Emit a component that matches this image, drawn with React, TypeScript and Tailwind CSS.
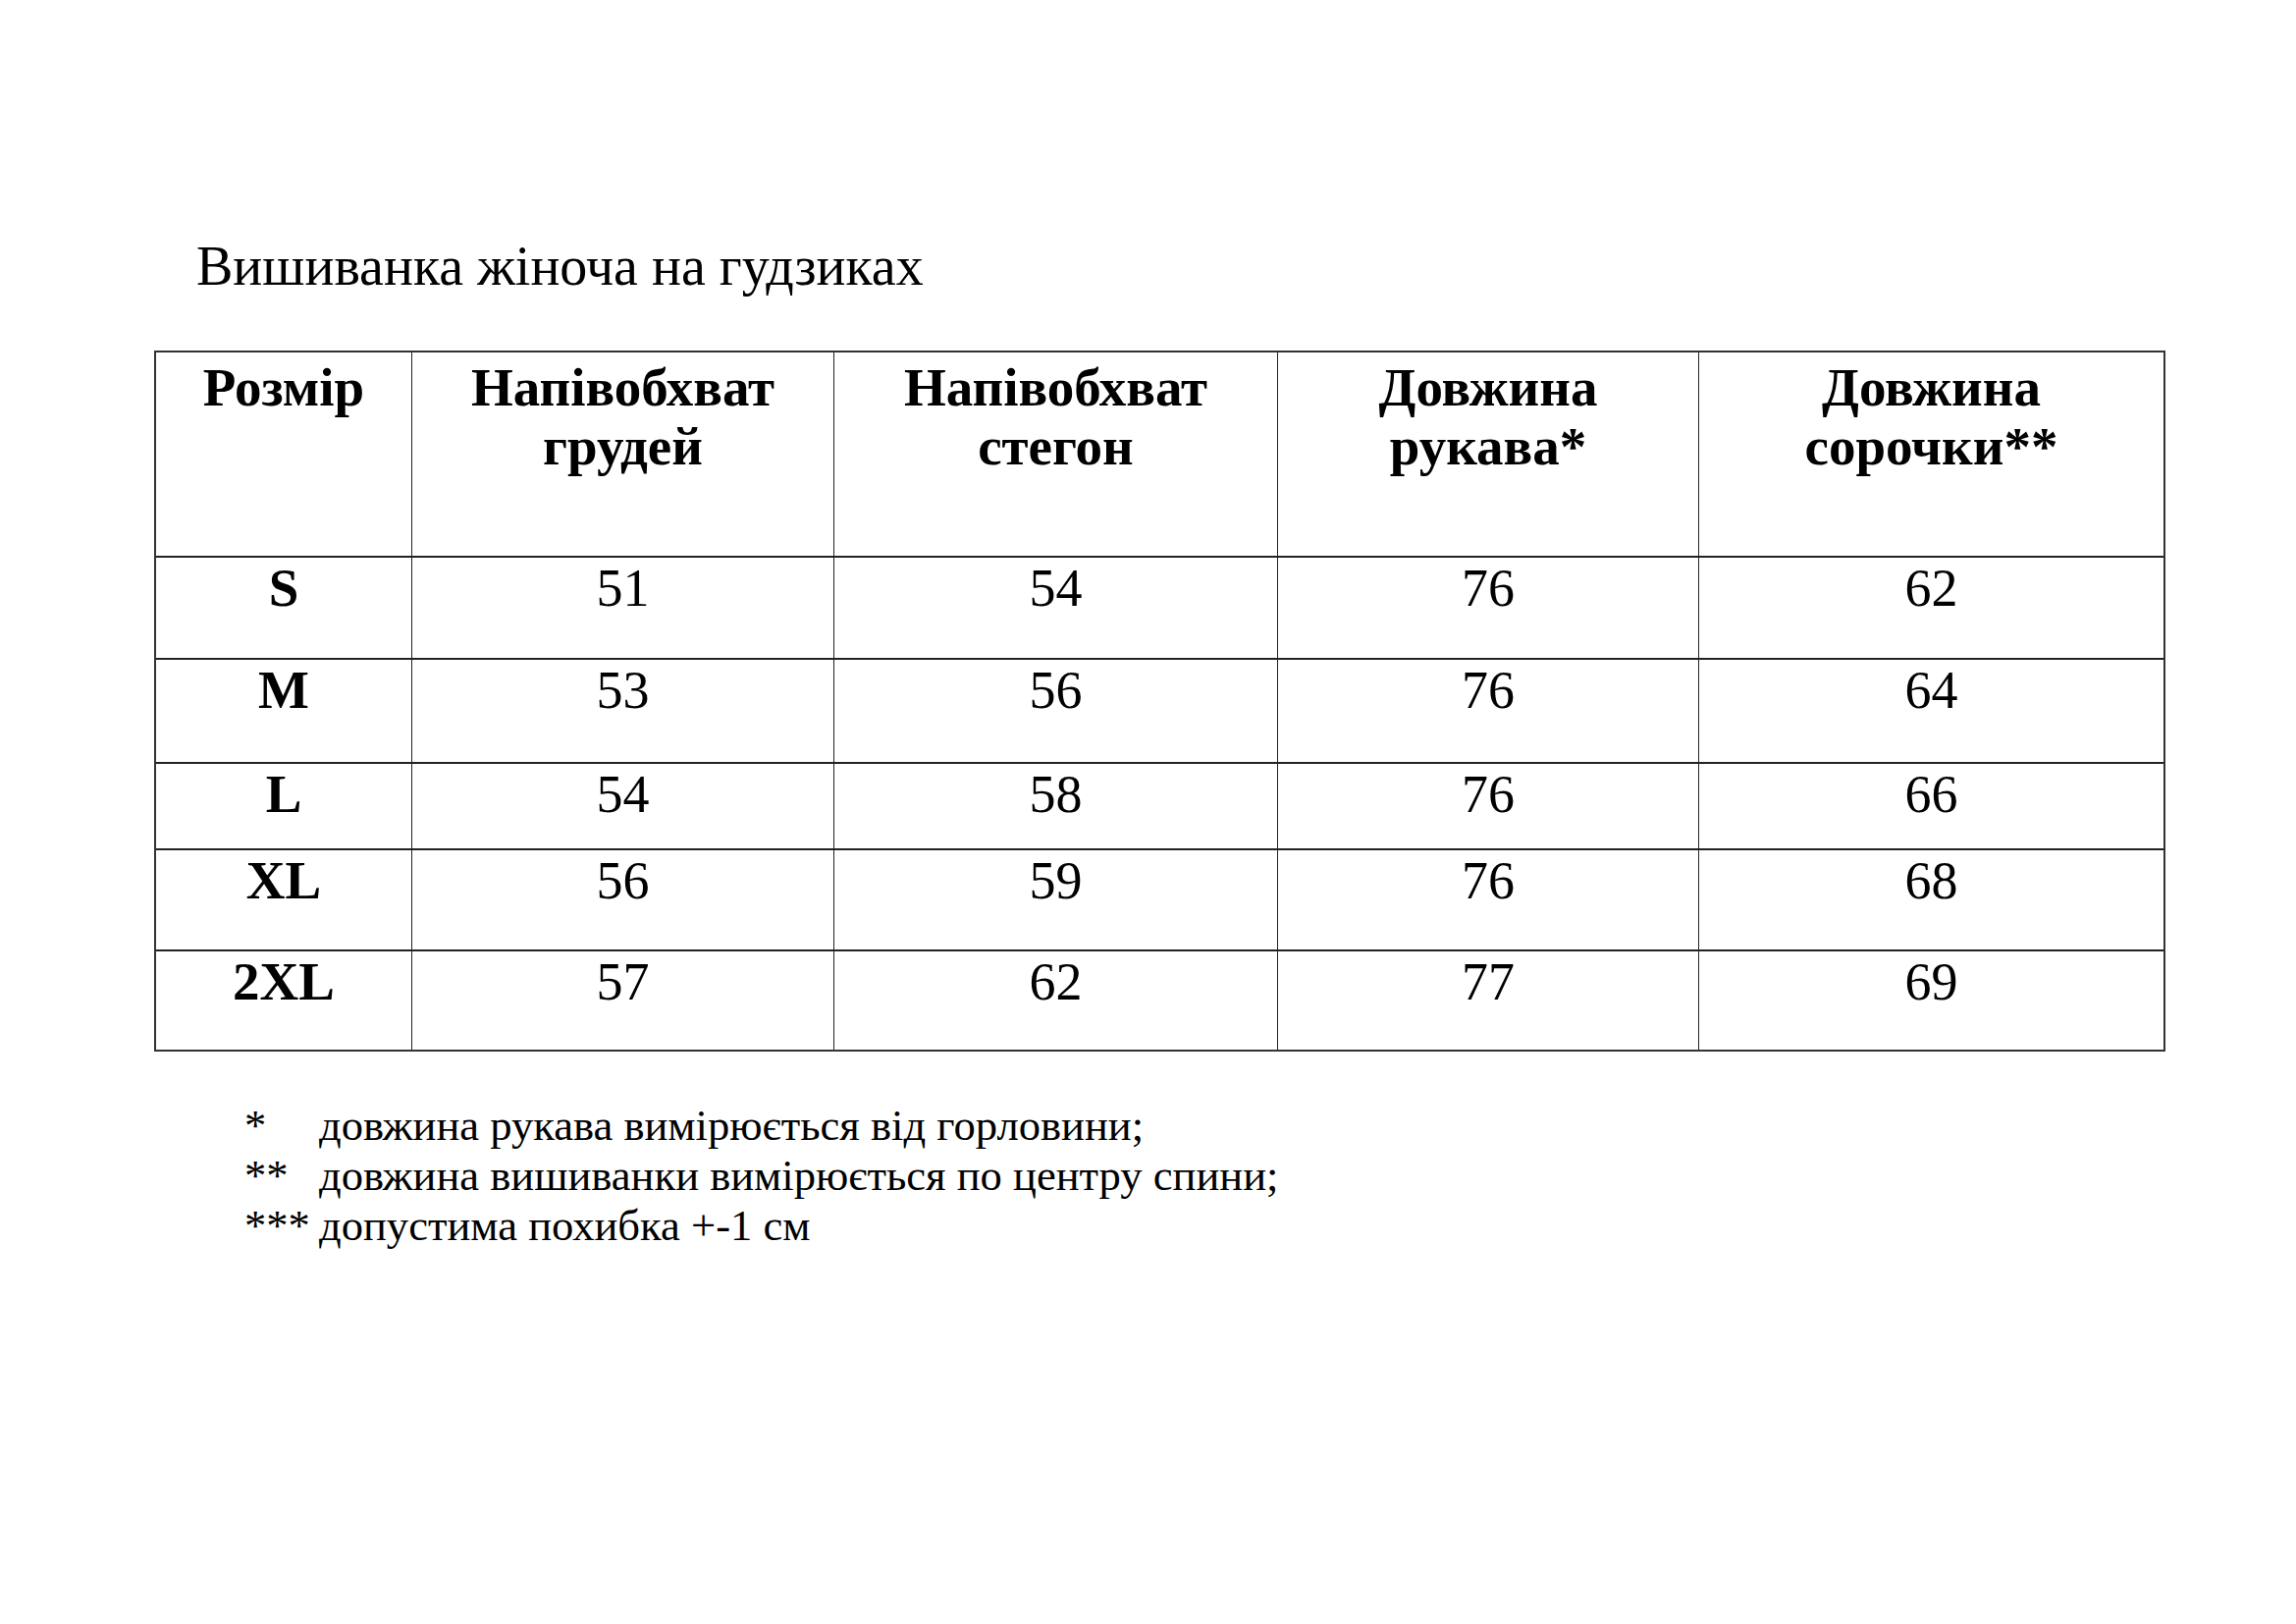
const serif = "font-['Liberation_Serif','Times_New_Roman',serif]";

const header = [
  ["Розмір"],
  ["Напівобхват", "грудей"],
  ["Напівобхват", "стегон"],
  ["Довжина", "рукава*"],
  ["Довжина", "сорочки**"],
];

const rows: { size: string; values: string[]; h: string }[] = [
  { size: "S", values: ["51", "54", "76", "62"], h: "h-[104px]" },
  { size: "M", values: ["53", "56", "76", "64"], h: "h-[106px]" },
  { size: "L", values: ["54", "58", "76", "66"], h: "h-[88px]" },
  { size: "XL", values: ["56", "59", "76", "68"], h: "h-[103px]" },
  { size: "2XL", values: ["57", "62", "77", "69"], h: "h-[100px]" },
];

const notes = [
  ["*", "довжина рукава вимірюється від горловини;"],
  ["**", "довжина вишиванки вимірюється по центру спини;"],
  ["***", "допустима похибка +-1 см"],
];

export default function App() {
  return (
    <div className={`w-[2339px] h-[1654px] bg-white text-black ${serif}`}>
      <div className="pl-[200px] pt-[236px] text-[56px] leading-[70px]">Вишиванка жіноча на гудзиках</div>

      <div className="ml-[157px] mt-[51px] w-[2049px] border-2 border-[#333]">
        <div className="grid grid-cols-[261px_430px_452px_429px_1fr] h-[209px] border-b-2 border-[#222]">
          {header.map((lines, i) => (
            <div
              key={i}
              className={`pt-[6px] text-center text-[55px] leading-[60px] font-bold ${i < 4 ? "border-r border-[#222]" : ""}`}
            >
              {lines.map((l) => (
                <div key={l}>{l}</div>
              ))}
            </div>
          ))}
        </div>
        {rows.map((r, ri) => (
          <div
            key={r.size}
            className={`grid grid-cols-[261px_430px_452px_429px_1fr] ${r.h} ${ri < rows.length - 1 ? "border-b-2 border-[#222]" : ""}`}
          >
            <div className="border-r border-[#222] text-center text-[55px] leading-[60px] font-bold pt-[1px]">{r.size}</div>
            {r.values.map((v, i) => (
              <div
                key={i}
                className={`text-center text-[54px] leading-[60px] pt-[1px] ${i < 3 ? "border-r border-[#222]" : ""}`}
              >
                {v}
              </div>
            ))}
          </div>
        ))}
      </div>

      <div className="pl-[249px] pt-[50px] text-[44.6px] leading-[51px]">
        {notes.map(([m, t]) => (
          <div key={m} className="flex">
            <span className="w-[76px] shrink-0">{m}</span>
            <span>{t}</span>
          </div>
        ))}
      </div>
    </div>
  );
}
